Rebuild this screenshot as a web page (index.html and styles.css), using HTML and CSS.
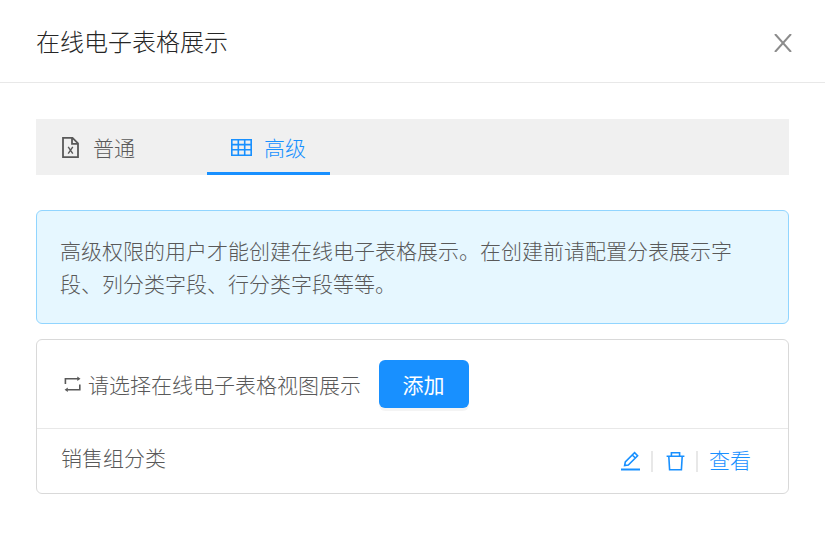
FILE: index.html
```html
<!DOCTYPE html>
<html lang="zh-CN">
<head>
  <meta charset="utf-8">
  <title>在线电子表格展示</title>
  <link rel="stylesheet" href="styles.css">
</head>
<body>
  <div class="modal">
    <header class="modal-header">
      <h1 class="modal-title">在线电子表格展示</h1>
      <svg class="modal-close" width="18" height="18" viewBox="0 0 18 18"><path d="M1 0L17 18M17 0L1 18"/></svg>
    </header>

    <div class="modal-body">
      <nav class="tabs">
        <a class="tab">
          <svg class="icon" width="21" height="22" viewBox="0 0 21 22">
            <path d="M3 1.8H12.5L18 7.3V21.2H3ZM12 1.8V7.8H18" stroke-width="1.8"/>
            <path d="M8.2 10.8L12.8 17.6M12.8 10.8L8.2 17.6" stroke-width="1.4"/>
          </svg>
          <span>普通</span>
        </a>
        <a class="tab tab-active">
          <svg class="icon" width="21" height="22" viewBox="0 0 21 22">
            <path d="M.8 3.8H20.2V19.2H.8ZM.8 8.6H20.2M.8 13.8H20.2M7.3 3.8V19.2M13.7 3.8V19.2" stroke-width="1.6"/>
          </svg>
          <span>高级</span>
        </a>
      </nav>

      <div class="alert">高级权限的用户才能创建在线电子表格展示。在创建前请配置分表展示字段、列分类字段、行分类字段等等。</div>

      <section class="list">
        <div class="list-header">
          <svg class="icon icon-retweet" width="21" height="22" viewBox="0 0 21 22">
            <path d="M3.4 11V5.7H16M17.8 11.5V16.8H5.2" stroke-width="1.6"/>
            <path class="solid" d="M15.3 3.4L18.5 5.7L15.3 8ZM5.8 14.5L2.6 16.8L5.8 19.1Z"/>
          </svg>
          <span>请选择在线电子表格视图展示</span>
          <button class="btn">添加</button>
        </div>
        <div class="list-item">
          <span class="item-name">销售组分类</span>
          <div class="actions">
            <a class="action">
              <svg class="icon" width="21" height="22" viewBox="0 0 21 22">
                <path d="M1 19.5H20" stroke-width="2"/>
                <path d="M4.6 15.6L5.3 12L14.6 2.7L17.6 5.7L8.3 15ZM12.3 5L15.3 8" stroke-width="1.6"/>
              </svg>
            </a>
            <a class="action">
              <svg class="icon" width="21" height="22" viewBox="0 0 21 22">
                <path d="M1.6 6.2H19.4M6.4 6V2.8H14.6V6M3.8 6.2L4.6 19.8H16.4L17.2 6.2" stroke-width="1.6"/>
              </svg>
            </a>
            <a class="action"><span class="action-text">查看</span></a>
          </div>
        </div>
      </section>
    </div>
  </div>
</body>
</html>
```
FILE: styles.css
```css
* {
  box-sizing: border-box;
}

body {
  margin: 0;
  background: #fff;
  color: #595959;
  font-family: "Noto Sans CJK SC", sans-serif;
  font-size: 21px;
  font-weight: 300;
  line-height: 33px;
}

.modal-header {
  display: flex;
  align-items: center;
  justify-content: space-between;
  height: 83px;
  padding: 0 33px 2px 36px;
  border-bottom: 1px solid #e8e8e8;
}

.modal-title {
  margin: 0;
  color: #262626;
  font-size: 24px;
  font-weight: 300;
}

.modal-close {
  margin-top: 5px;
  fill: none;
  stroke: #8c8c8c;
  stroke-width: 2;
}

.modal-body {
  padding: 36px 36px 0;
}

.tabs {
  display: flex;
  gap: 48px;
  height: 56px;
  background: #f0f0f0;
}

.tab {
  display: flex;
  align-items: center;
  gap: 12px;
  padding: 3px 24px 0;
  border-bottom: 3px solid transparent;
}

.tab-active {
  border-bottom-color: #1890ff;
  color: #1890ff;
}

.icon {
  display: block;
  flex: none;
  fill: none;
  stroke: currentColor;
}

.solid {
  fill: currentColor;
  stroke: none;
}

.alert {
  height: 114px;
  margin-top: 35px;
  padding: 23px 50px 23px 23px;
  border: 1px solid #91d5ff;
  border-radius: 6px;
  background: #e6f7ff;
}

.list {
  height: 155px;
  margin-top: 15px;
  border: 1px solid #d9d9d9;
  border-radius: 6px;
}

.list-header {
  display: flex;
  align-items: center;
  height: 89px;
  padding-left: 25px;
  border-bottom: 1px solid #e8e8e8;
}

.icon-retweet {
  margin-right: 5px;
}

.btn {
  width: 90px;
  height: 48px;
  margin-left: 18px;
  padding: 0 1px 0 0;
  border: none;
  border-radius: 6px;
  background: #1890ff;
  box-shadow: 0 3px 0 rgba(0, 0, 0, 0.045);
  color: #fff;
  font: inherit;
  font-weight: 400;
}

.list-item {
  display: flex;
  align-items: center;
  justify-content: space-between;
  height: 64px;
  padding: 0 37px 0 24px;
}

.item-name {
  margin-top: -7px;
}

.actions {
  display: flex;
  align-items: center;
}

.action {
  display: flex;
  align-items: center;
  height: 21px;
  color: #1890ff;
}

.action + .action {
  margin-left: 10px;
  padding-left: 12px;
  border-left: 2px solid #e8e8e8;
}

.action-text {
  margin: -3px 0 0 -1px;
}
```
